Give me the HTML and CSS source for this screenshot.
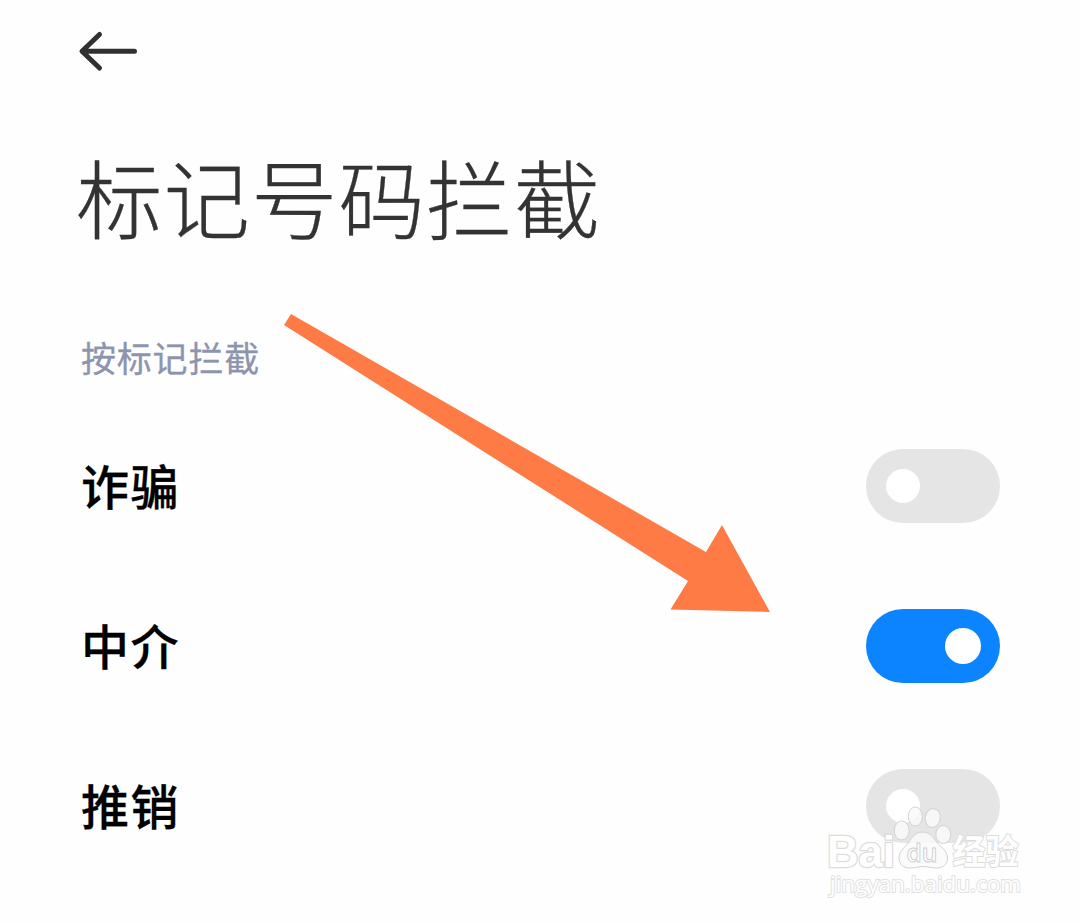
FILE: index.html
```html
<!DOCTYPE html>
<html lang="zh-CN">
<head>
<meta charset="utf-8">
<title>标记号码拦截</title>
<link rel="stylesheet" href="styles.css">
</head>
<body>
<main class="screen">
  <header class="topbar">
    <svg class="back" viewBox="0 0 60 42" width="60" height="42"><path d="M21.500 4.500 4 21.300l17.500 16.700M5 21.300h51.500"/></svg>
  </header>
  <h1 class="title">标记号码拦截</h1>
  <h2 class="section">按标记拦截</h2>
  <ul class="list">
    <li class="row"><span class="label">诈骗</span><span class="switch"><i class="knob"></i></span></li>
    <li class="row"><span class="label">中介</span><span class="switch on"><i class="knob"></i></span></li>
    <li class="row"><span class="label">推销</span><span class="switch"><i class="knob"></i></span></li>
  </ul>
  <svg class="pointer" viewBox="0 0 1080 922" width="1080" height="922"><path d="M291 314 706 552 722 525 770 612 670.500 609.500 688 581 284 325Z"/></svg>
  <svg class="watermark" viewBox="0 0 220 110" width="220" height="110">
    <text class="brand" x="4" y="66.500" textLength="68" lengthAdjust="spacingAndGlyphs">Bai</text>
    <g class="paw">
      <ellipse cx="78.700" cy="30.500" rx="7.500" ry="9.500"/>
      <ellipse cx="92.300" cy="16.500" rx="7" ry="9.500"/>
      <ellipse cx="109.700" cy="18" rx="7.500" ry="9.500" transform="rotate(10 109.700 18)"/>
      <ellipse cx="120.300" cy="34.500" rx="7.500" ry="9"/>
      <path d="M99.500 32c8 0 11 6 14 10 3 4 11 8 11 16 0 7-5 10-11 10-5 0-9-1.500-13.500-1.500S92 68 87 68c-6 0-11-3-11-10 0-8 7-11 10-16 3-4 6-10 13.500-10Z"/>
    </g>
    <text class="du" x="83.500" y="62.300" textLength="31" lengthAdjust="spacingAndGlyphs">du</text>
    <text class="cn" x="129.500" y="64" textLength="66" lengthAdjust="spacingAndGlyphs">经验</text>
    <text class="url" x="7" y="92" textLength="191" lengthAdjust="spacingAndGlyphs">jingyan.baidu.com</text>
  </svg>
</main>
</body>
</html>
```
FILE: styles.css
```css
* { box-sizing: border-box; margin: 0; padding: 0; }
body { background: #fefefe; font-family: "Noto Sans CJK SC", "Noto Sans", sans-serif; }
.screen { position: relative; width: 1080px; height: 922px; overflow: hidden; padding: 30px 80px 0 76px; }
.topbar { height: 42px; padding-left: 2px; }
.back { display: block; fill: none; stroke: #303030; stroke-width: 5; stroke-linecap: round; stroke-linejoin: round; }
.title { margin-top: 64px; height: 120px; font-size: 86.5px; line-height: 120px; font-weight: 300; letter-spacing: 1px; color: #333; white-space: nowrap; -webkit-text-stroke: 0.3px #333; }
.section { margin-top: 76px; height: 50px; padding-left: 5px; font-size: 35px; line-height: 50px; letter-spacing: 0.8px; font-weight: 400; color: #8d95ae; -webkit-text-stroke: 0.3px #8d95ae; }
.list { list-style: none; margin-top: 24px; }
.row { display: flex; align-items: center; justify-content: space-between; height: 160px; }
.label { padding: 0 0 5px 5px; font-size: 48px; line-height: 80px; letter-spacing: 1.5px; font-weight: 500; color: #000; -webkit-text-stroke: 0.3px #000; }
.switch { display: flex; align-items: center; width: 134px; height: 74px; padding: 0 20px; border-radius: 37px; background: #e5e5e5; }
.knob { width: 34px; height: 34px; border-radius: 50%; background: #fff; }
.on { justify-content: flex-end; padding-right: 19px; background: #0d84ff; }
.on .knob { width: 36px; height: 36px; }
.pointer { position: absolute; left: 0; top: 0; fill: #ff7b45; }
.watermark { position: absolute; left: 823px; top: 800px; fill: #fff; stroke: #dcdcdc; stroke-width: 1; }
.brand { font: 700 44px "Liberation Sans", Arial, sans-serif; stroke-width: 2.5; paint-order: stroke; }
.paw { fill: #fafafa; fill-opacity: 0.85; stroke: #d2d2d2; }
.du { font: 600 26px "Open Sans", sans-serif; stroke: #cfcfcf; }
.cn { font: 700 34px "Noto Sans CJK SC", sans-serif; stroke-width: 2; paint-order: stroke; }
.url { font: 400 22px "Open Sans", sans-serif; stroke: #e2e2e2; paint-order: stroke; stroke-width: 2; }
```
